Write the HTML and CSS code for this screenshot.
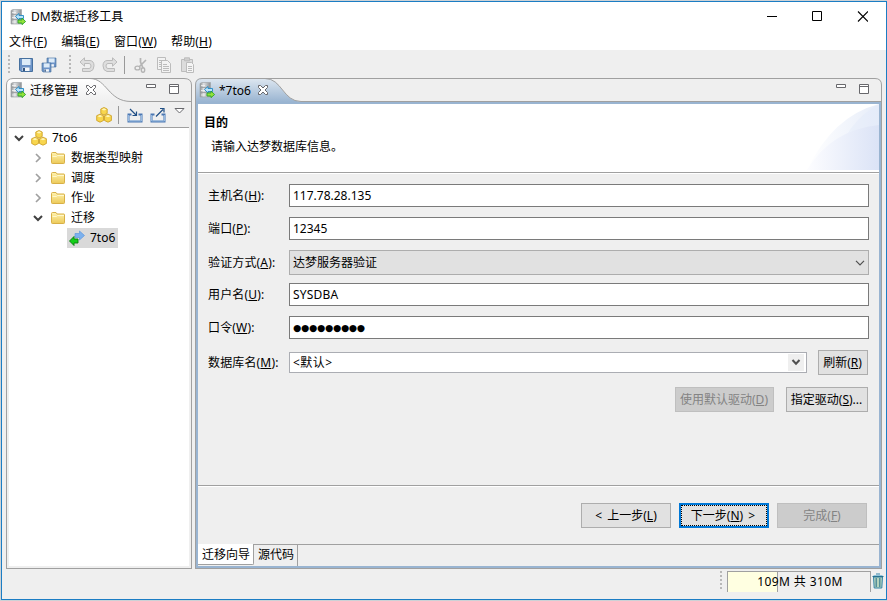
FILE: index.html
```html
<!DOCTYPE html>
<html lang="zh-CN">
<head>
    <meta charset="UTF-8">
    <title>DM数据迁移工具</title>
    <link rel="stylesheet" href="styles.css">
</head>
<body>

<!-- shared icons -->
<svg class="defs" width="0" height="0">
    <defs>
        <linearGradient id="gold" x1="0" y1="0" x2="0" y2="1"><stop offset="0" stop-color="#fff3b0"/><stop offset="1" stop-color="#ecc958"/></linearGradient>
        <linearGradient id="steel" x1="0" y1="0" x2="1" y2="0"><stop offset="0" stop-color="#8c9093"/><stop offset=".35" stop-color="#dfe1e3"/><stop offset="1" stop-color="#8b8f93"/></linearGradient>
        <linearGradient id="tabLeft" x1="0" y1="0" x2="0" y2="1"><stop offset="0" stop-color="#fff"/><stop offset="1" stop-color="#efefef"/></linearGradient>
        <linearGradient id="tabBlue" x1="0" y1="0" x2="0" y2="1"><stop offset="0" stop-color="#dfe8f1"/><stop offset="1" stop-color="#99b4d1"/></linearGradient>
        <linearGradient id="bannerFade" x1="0" y1="0" x2="1" y2="0"><stop offset="0" stop-color="#fff"/><stop offset="1" stop-color="#e7edf9"/></linearGradient>
        <linearGradient id="bannerDeep" x1="0" y1="0" x2="1" y2="0"><stop offset="0" stop-color="#fdfdff"/><stop offset="1" stop-color="#dbe3f6"/></linearGradient>
        <symbol id="server" viewBox="0 0 16 16">
            <path d="M1 1.500 3 .5h8.500v14.500H1z" fill="url(#steel)" stroke="#a2a6a9" stroke-width=".7"/>
            <path d="M1 5.500h10.500M1 10.500h10.500" stroke="#95999c" stroke-width=".8"/>
            <path d="M2 3.500h4M2 8.500h4M2 13h4" stroke="#f4f4f4" stroke-width=".8"/>
            <path d="M5.500 7.500 9 4.500v2h4.500v3H9v1.500z" fill="#b9e4fa" stroke="#2288c4" stroke-width=".9"/>
            <path d="M15.600 12.500 12 9v2H8v3h4v1.700z" fill="#92e23a" stroke="#2ca52b" stroke-width=".9"/>
        </symbol>
        <symbol id="cubes" viewBox="0 0 16 16">
            <g fill="#f8d64e" stroke="#c99a1c" stroke-width=".8">
                <path d="M4.800 2 8 .5 11.200 2v4.500L8 8 4.800 6.500z"/>
                <path d="M.700 8.700 4 7.200l3.500 1.500v4.800L4 15.200.700 13.500z"/>
                <path d="M8.500 8.700 12 7.200l3.400 1.500v4.800L12 15.200l-3.500-1.700z"/>
            </g>
            <path d="M5.500 2.400 8 1.300l2.500 1.100L8 3.600zM1.500 9.200 4 8.100l2.600 1.100L4 10.300zM9.400 9.200 12 8.100l2.600 1.100-2.600 1.100z" fill="#fff5b8"/>
        </symbol>
        <symbol id="folder" viewBox="0 0 16 16">
            <path d="M1.500 12.500v-9q0-1 1-1h3.500l1 1.500h7q.500 0 .500.700v8q0 .800-.800.800H2.300q-.800 0-.800-1z" fill="url(#gold)" stroke="#d8b047"/>
            <path d="M2.500 6.500h4l1-1h6.500" fill="none" stroke="#fff8cc"/>
        </symbol>
        <symbol id="closeTab" viewBox="0 0 12 12">
            <path d="M1.500 1.500h2L6 4l2.500-2.500h2v2L8 6l2.500 2.500v2h-2L6 8l-2.500 2.500h-2v-2L4 6 1.500 3.500z" fill="#fff" stroke="#68686c"/>
        </symbol>
        <symbol id="chevDown" viewBox="0 0 10 10"><path d="M1 3l4 4 4-4" fill="none" stroke="#404040" stroke-width="2"/></symbol>
        <symbol id="chevRight" viewBox="0 0 10 10"><path d="M3 1l4 4-4 4" fill="none" stroke="#a0a0a0" stroke-width="1.700"/></symbol>
        <symbol id="minView" viewBox="0 0 11 11"><path d="M.5.5h9v3h-9z" fill="#fff" stroke="#68686c"/></symbol>
        <symbol id="maxView" viewBox="0 0 11 11"><path d="M.5.5h9v9h-9zM.5 2.500h9" fill="#fff" stroke="#68686c"/></symbol>
        <symbol id="disk" viewBox="0 0 16 16">
            <path d="M1.500 1.500h13v13H3l-1.500-1.500z" fill="#6d94c8" stroke="#46709f"/>
            <path d="M4 2h8.500v6H4z" fill="#dcebf8"/>
            <path d="M4.500 10.500h7V14h-7z" fill="#f4f7fa"/><path d="M5 11h2v3H5z" fill="#33557f"/>
        </symbol>
        <symbol id="undo" viewBox="0 0 16 16">
            <path d="M1 5 5.500.8v2.700H11q4 .5 4 5.300t-4 5.700H3.500v-3H10q2 0 2-2.500T10 6.500H5.500v2.700z" fill="#dedede" stroke="#bababa"/>
        </symbol>
        <symbol id="tray" viewBox="0 0 16 16">
            <path d="M4.500 7.500h-3v7h13v-7h-3" fill="none" stroke="#4c78b3" stroke-width="2"/>
            <path d="M1.500 8v6h13V8" fill="none" stroke="#a9cbee" stroke-width=".8"/>
        </symbol>
    </defs>
</svg>

<div class="window">
    <header class="titlebar">
        <svg class="icon"><use href="#server"/></svg>
        <span class="app-title">DM数据迁移工具</span>
        <svg class="window-controls" width="101" height="11" fill="none" stroke="#000">
            <path d="M0 5.500h10M45.500.5h9v9h-9z"/>
            <path d="M91 .5l10 10M101 .5l-10 10" stroke-width="1.100"/>
        </svg>
    </header>

    <nav class="menubar">
        <span>文件(<u>F</u>)</span>
        <span>编辑(<u>E</u>)</span>
        <span>窗口(<u>W</u>)</span>
        <span>帮助(<u>H</u>)</span>
    </nav>

    <div class="toolbar">
        <i class="grip"></i>
        <svg class="icon save"><use href="#disk"/></svg>
        <svg class="icon save-all" viewBox="0 0 16 16">
            <use href="#disk" x="5" y="0" width="11" height="11"/>
            <use href="#disk" x="0" y="5" width="11" height="11"/>
        </svg>
        <i class="grip second"></i>
        <svg class="icon undo"><use href="#undo"/></svg>
        <svg class="icon redo"><use href="#undo"/></svg>
        <i class="separator"></i>
        <svg class="icon cut" viewBox="0 0 16 16" fill="none" stroke="#b4b4b4">
            <path d="M7.500 1v4l2.500 6M13 3 6 10" stroke-width="1.700"/>
            <ellipse cx="4.500" cy="11" rx="2.500" ry="1.900" stroke-width="1.400"/><ellipse cx="10" cy="13" rx="1.700" ry="2.300" stroke-width="1.400"/>
        </svg>
        <svg class="icon copy" viewBox="0 0 16 16" fill="#f3f3f3" stroke="#bcbcbc">
            <path d="M1.500.5h8v12h-8z"/><path d="M5.500 3.500h6l3 3v9h-9z"/>
            <path d="M7 7.500h4M7 9.500h6M7 11.500h6M7 13.500h6M3 3.500h4M3 5.500h2M3 7.500h2M3 9.500h2"/>
        </svg>
        <svg class="icon paste" viewBox="0 0 16 16" stroke="#bcbcbc">
            <path d="M1.500 2.500h11v12h-11z" fill="#dcdcdc"/><path d="M4.500.8h5v3h-5z" fill="#cfcfcf"/>
            <path d="M6.500 5.500h5l2 2v8h-7z" fill="#f5f5f5"/><path d="M8 9.500h4M8 11.500h4M8 13.500h4"/>
        </svg>
    </div>

    <main class="workbench">
        <section class="view explorer">
            <div class="tab-head">
                <svg class="tab-shape" width="186" height="24" fill="none">
                    <path d="M0 24V7Q0 0 7 0H84C101 0 101 23 125 23.500V24z" fill="url(#tabLeft)"/>
                    <path d="M.5 24V7Q.5.5 7 .5H178Q185.500.5 185.500 7V24M84 .5C101 .5 102 23.500 125 23.500H186" stroke="#a0a0a0"/>
                </svg>
                <svg class="icon"><use href="#server"/></svg>
                <span class="tab-title">迁移管理</span>
                <svg class="close"><use href="#closeTab"/></svg>
                <svg class="view-button minimize"><use href="#minView"/></svg>
                <svg class="view-button"><use href="#maxView"/></svg>
            </div>
            <div class="explorer-body">
                <div class="view-toolbar">
                    <svg class="icon"><use href="#cubes"/></svg>
                    <i class="separator"></i>
                    <svg class="icon import" viewBox="0 0 16 16" fill="none">
                        <use href="#tray"/>
                        <path d="M3 2l6 6M9.500 4.500v4h-4" stroke="#214f85" stroke-width="1.200"/>
                    </svg>
                    <svg class="icon export" viewBox="0 0 16 16" fill="none">
                        <use href="#tray"/>
                        <path d="M6 9.500l7-7M10 1.500h4v4" stroke="#214f85" stroke-width="1.200"/>
                    </svg>
                    <svg class="view-menu" width="11" height="6"><path d="M1 .5h9L5.500 5z" fill="#fff" stroke="#68686c"/></svg>
                </div>
                <div class="tree">
                    <div class="node root"><svg class="arrow"><use href="#chevDown"/></svg><svg class="icon"><use href="#cubes"/></svg><span>7to6</span></div>
                    <div class="node"><svg class="arrow"><use href="#chevRight"/></svg><svg class="icon"><use href="#folder"/></svg><span>数据类型映射</span></div>
                    <div class="node"><svg class="arrow"><use href="#chevRight"/></svg><svg class="icon"><use href="#folder"/></svg><span>调度</span></div>
                    <div class="node"><svg class="arrow"><use href="#chevRight"/></svg><svg class="icon"><use href="#folder"/></svg><span>作业</span></div>
                    <div class="node"><svg class="arrow"><use href="#chevDown"/></svg><svg class="icon"><use href="#folder"/></svg><span>迁移</span></div>
                    <div class="node leaf">
                        <svg class="icon" viewBox="0 0 16 16">
                            <path d="M15.500 5.500 10.500 1v2.500H6v4h4.500V10z" fill="#7bb1ee" stroke="#5f98dc" stroke-width=".7"/>
                            <path d="M.5 11 5 6.500V9h4v4H5v2.500z" fill="#12cf18" stroke="#087e0c" stroke-width=".9"/>
                        </svg>
                        <span>7to6</span>
                    </div>
                </div>
            </div>
        </section>

        <section class="view editor">
            <div class="tab-head">
                <svg class="tab-shape" width="687" height="24" fill="none">
                    <path d="M0 24V7Q0 0 7 0H70C87 0 87 23 106 23.500V24z" fill="url(#tabBlue)"/>
                    <path d="M.5 24V7Q.5.5 7 .5H680Q686.500.5 686.500 7V24M70 .5C87 .5 88 23.500 106 23.500H687" stroke="#a0a0a0"/>
                </svg>
                <svg class="icon"><use href="#server"/></svg>
                <span class="tab-title">*7to6</span>
                <svg class="close"><use href="#closeTab"/></svg>
                <svg class="view-button minimize"><use href="#minView"/></svg>
                <svg class="view-button"><use href="#maxView"/></svg>
            </div>
            <div class="editor-body">
                <div class="banner">
                    <div class="banner-text">
                        <h1>目的</h1>
                        <p>请输入达梦数据库信息。</p>
                    </div>
                    <svg width="72" height="66">
                        <path d="M0 66Q26 12 72 0V66z" fill="url(#bannerFade)"/>
                        <path d="M24 66Q40 16 72 0V66z" fill="#dfe7f8" opacity=".35"/>
                        <path d="M0 66Q24 26 72 21V66z" fill="url(#bannerDeep)"/>
                    </svg>
                </div>

                <form class="settings">
                    <div class="row"><label>主机名(<u>H</u>):</label><div class="field">117.78.28.135</div></div>
                    <div class="row"><label>端口(<u>P</u>):</label><div class="field">12345</div></div>
                    <div class="row auth"><label>验证方式(<u>A</u>):</label><div class="field select">达梦服务器验证
                        <svg width="10" height="6"><path d="M1 .8l4 4 4-4" fill="none" stroke="#505050" stroke-width="1.200"/></svg></div></div>
                    <div class="row"><label>用户名(<u>U</u>):</label><div class="field user">SYSDBA</div></div>
                    <div class="row"><label>口令(<u>W</u>):</label><div class="field password">●●●●●●●●●</div></div>
                    <div class="row database"><label>数据库名(<u>M</u>):</label>
                        <div class="field combo">&lt;默认&gt;<span class="drop"><svg width="10" height="7"><path d="M1.500 1l3.500 3.800L8.500 1" fill="none" stroke="#505050" stroke-width="2"/></svg></span></div>
                        <div class="button refresh">刷新(<u>R</u>)</div>
                    </div>
                    <div class="driver-buttons">
                        <div class="button default-driver disabled">使用默认驱动(<u>D</u>)</div>
                        <div class="button set-driver">指定驱动(<u>S</u>)...</div>
                    </div>
                </form>

                <div class="wizard-buttons">
                    <div class="button">&lt; 上一步(<u>L</u>)</div>
                    <div class="button primary"><span>下一步(<u>N</u>) &gt;</span></div>
                    <div class="button disabled">完成(<u>F</u>)</div>
                </div>

                <div class="page-tabs">
                    <span class="page-tab active">迁移向导</span>
                    <span class="page-tab">源代码</span>
                    <span class="rest"></span>
                </div>
            </div>
        </section>
    </main>

    <footer class="statusbar">
        <i class="grip"></i>
        <div class="heap">109M 共 310M</div>
        <svg class="trash" width="12" height="16" viewBox="0 0 12 16">
            <path d="M1.500 4h9l-.700 11H2.200z" fill="#b5d3bd" stroke="#3584a8"/>
            <path d="M4.200 5v9M7.800 5v9" stroke="#3f7f93" stroke-width="1.200"/>
            <path d="M.5 3.500h11" stroke="#27718f"/>
            <path d="M1.500 2.500h9" stroke="#8fc3dc"/>
            <path d="M4 1h4" stroke="#3584a8"/>
        </svg>
    </footer>
</div>

</body>
</html>
```
FILE: styles.css
```css
* {
    box-sizing: border-box;
}

body {
    margin: 0;
    padding: 1px 0 0 1px;
    width: 887px;
    height: 601px;
    overflow: hidden;
    background: #cdd2d6;
    color: #000;
    font-family: "Noto Sans", "Noto Sans CJK SC", sans-serif;
    font-size: 12px;
    line-height: 16px;
}

.defs {
    position: absolute;
}

svg {
    display: block;
    flex: none;
}

u {
    text-underline-offset: 1px;
    text-decoration-thickness: 1px;
    text-decoration-skip-ink: none;
}

.window {
    width: 886px;
    height: 599px;
    border: 1px solid #1b7dc4;
    background: #efefef;
    display: flex;
    flex-direction: column;
}

.icon {
    width: 16px;
    height: 16px;
}

.titlebar {
    height: 30px;
    display: flex;
    align-items: center;
    padding: 0 18px 0 8px;
    background: #fff;
}

.app-title {
    margin-left: 5px;
    flex: 1;
    letter-spacing: 0.1px;
}

.window-controls {
    margin-bottom: 1px;
}

.menubar {
    height: 18px;
    display: flex;
    gap: 14px;
    padding: 2px 0 0 7px;
    background: #fff;
    letter-spacing: 0.15px;
}

/* Toolbar */
.toolbar {
    height: 28px;
    display: flex;
    align-items: center;
    padding: 2px 0 0 6px;
}

.grip {
    width: 2px;
    height: 20px;
    background: repeating-linear-gradient(#b8b8b8 0 2px, transparent 2px 4px);
}

.save {
    margin-left: 8px;
}

.save-all {
    margin-left: 7px;
}

.second {
    margin-left: 12px;
}

.undo {
    margin-left: 8px;
}

.redo {
    margin-left: 7px;
    transform: scaleX(-1);
}

.separator {
    width: 1px;
    height: 18px;
    background: #999;
}

.toolbar .separator {
    margin-left: 6px;
}

.cut {
    margin-left: 8px;
}

.copy, .paste {
    margin-left: 7px;
}

.paste {
    margin-left: 8px;
}

.workbench {
    height: 491px;
    display: flex;
    gap: 3px;
    padding-left: 4px;
}

.view {
    height: 491px;
    display: flex;
    flex-direction: column;
}

.explorer {
    width: 186px;
}

.editor {
    width: 687px;
}

.tab-head {
    position: relative;
    height: 24px;
    display: flex;
    align-items: center;
    padding: 0 12px 0 4px;
}

.tab-head > * {
    position: relative;
}

.tab-head .tab-shape {
    position: absolute;
    top: 0;
    left: 0;
}

.tab-title {
    margin: 1px 0 0 4px;
}

.editor .tab-title {
    margin-right: -1px;
}

.close {
    width: 12px;
    height: 12px;
    margin-left: 7px;
}

.view-button {
    width: 11px;
    height: 11px;
    margin: 0 0 1px 12px;
}

.minimize {
    margin-left: auto;
}

.explorer-body {
    flex: 1;
    border: 1px solid #a0a0a0;
    border-top: none;
    padding: 0 2px 2px;
    display: flex;
    flex-direction: column;
}

.view-toolbar {
    height: 26px;
    display: flex;
    align-items: center;
    padding: 1px 3px 0 87px;
    border-bottom: 1px solid #a0a0a0;
}

.view-toolbar .separator {
    margin-left: 6px;
}

.import {
    margin-left: 8px;
}

.export {
    margin-left: 7px;
}

.view-menu {
    margin: 0 0 8px 8px;
}

.tree {
    flex: 1;
    background: #fff;
}

.node {
    display: flex;
    align-items: center;
    height: 20px;
    padding-left: 24px;
}

.node.root {
    padding-left: 5px;
}

.arrow {
    width: 10px;
    height: 10px;
    margin-right: 7px;
}

.node span {
    margin-left: 5px;
}

.leaf {
    width: 51px;
    margin-left: 58px;
    padding-left: 2px;
    background: #d9d9d9;
}

/* Editor */
.editor-body {
    flex: 1;
    display: flex;
    flex-direction: column;
    border: 1px solid #a0a0a0;
    border-top: none;
    box-shadow: inset 0 0 0 2px #99b4d1;
    padding: 2px;
}

.banner {
    height: 70px;
    display: flex;
    justify-content: space-between;
    background: #fff;
    border-bottom: 1px solid #fff;
    box-shadow: inset 0 -1px #a0a0a0;
}

.banner-text {
    padding: 11px 0 0 6px;
}

.banner h1 {
    margin: 0;
    font-size: 12px;
    line-height: 16px;
}

.banner p {
    margin: 8px 0 0 7px;
}

.settings {
    height: 311px;
    padding: 10px 10px 0 10px;
}

.row {
    display: flex;
    align-items: center;
    height: 23px;
    margin-bottom: 10px;
}

.row label {
    width: 81px;
    letter-spacing: 0.15px;
}

.field {
    flex: 1;
    height: 23px;
    display: flex;
    align-items: center;
    justify-content: space-between;
    padding: 0 3px;
    border: 1px solid #7a7a7a;
    background: #fff;
}

.user {
    letter-spacing: 0.2px;
}

.auth {
    height: 25px;
    margin-bottom: 8px;
}

.select {
    height: 25px;
    padding-right: 3px;
    border-color: #adadad;
    background: #e1e1e1;
}

.password {
    font-family: "DejaVu Sans", sans-serif;
    font-size: 9.4px;
    letter-spacing: -0.2px;
}

.database {
    height: 25px;
    margin: 11px 1px 12px 0;
}

.combo {
    height: 21px;
    padding-right: 2px;
    border-color: #abadb3;
    letter-spacing: 0.5px;
}

.drop {
    width: 16px;
    height: 17px;
    display: flex;
    align-items: center;
    justify-content: center;
    background: #efefef;
}

.button {
    width: 90px;
    height: 25px;
    display: flex;
    align-items: center;
    justify-content: center;
    white-space: pre;
    border: 1px solid #adadad;
    background: #e1e1e1;
}

.disabled {
    color: #838383;
    border-color: #bfbfbf;
    background: #ccc;
}

.refresh {
    width: 50px;
    margin-left: 11px;
}

.driver-buttons {
    display: flex;
    justify-content: flex-end;
    gap: 12px;
    padding-right: 1px;
}

.driver-buttons .button, .refresh {
    padding-right: 1px;
}

.default-driver {
    width: 99px;
}

.set-driver {
    width: 82px;
}

.wizard-buttons {
    height: 59px;
    display: flex;
    justify-content: flex-end;
    gap: 8px;
    padding: 17px 12px 0 0;
    border-top: 1px solid #a0a0a0;
    box-shadow: inset 0 1px #fff;
    word-spacing: 2px;
}

.primary {
    border: 2px solid #0078d7;
}

.primary span {
    width: 86px;
    height: 21px;
    border: 1px dotted #000;
    padding-right: 2px;
    text-align: center;
    line-height: 19px;
}

.page-tabs {
    height: 22px;
    display: flex;
}

.page-tab {
    width: 44px;
    padding: 2px 0 0 4px;
    border-top: 1px solid #a0a0a0;
    border-right: 1px solid #a0a0a0;
}

.page-tab.active {
    width: 56px;
    height: 21px;
    padding-top: 3px;
    border-top: none;
    border-bottom: 1px solid #a0a0a0;
    border-bottom-right-radius: 2px;
    background: #fff;
}

.rest {
    flex: 1;
    border-top: 1px solid #a0a0a0;
}

/* Status bar */
.statusbar {
    flex: 1;
    display: flex;
    align-items: flex-start;
    justify-content: flex-end;
    padding: 2px 2px 0 0;
}

.heap {
    width: 144px;
    height: 21px;
    margin-left: 5px;
    padding-left: 2px;
    border: 1px solid #a0a0a0;
    border-bottom: none;
    background: linear-gradient(to right, #ffffe1 49px, #a0a0a0 49px, #a0a0a0 50px, #efefef 50px);
    text-align: center;
    line-height: 20px;
    letter-spacing: 0.4px;
}

.trash {
    margin: 2px 0 0 1px;
}
```
